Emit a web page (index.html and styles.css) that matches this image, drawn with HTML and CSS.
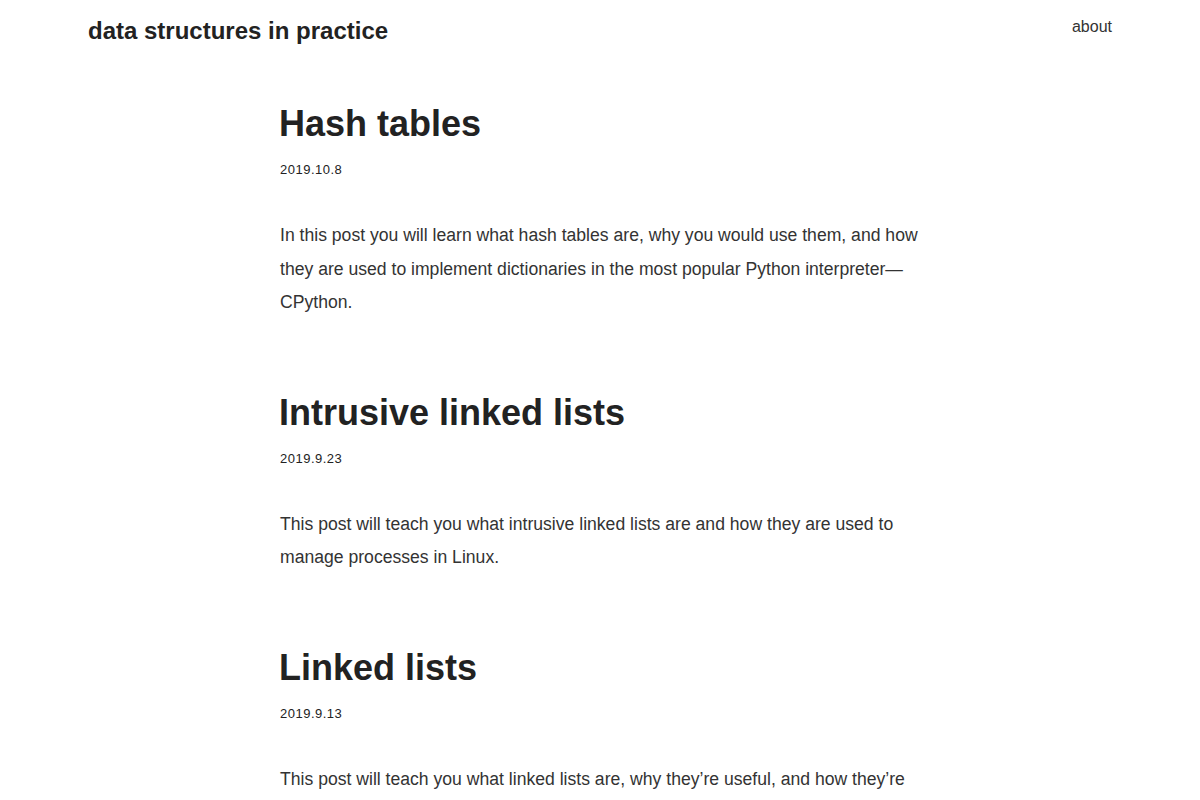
FILE: index.html
```html
<!DOCTYPE html>
<html lang="en">
<head>
    <meta charset="UTF-8">
    <meta name="viewport" content="width=device-width, initial-scale=1.0">
    <title>data structures in practice</title>
    <link rel="stylesheet" href="styles.css">
</head>
<body>

    <header class="site-header">
        <a class="site-title" href="#">data structures in practice</a>
        <nav class="site-nav">
            <a href="#">about</a>
        </nav>
    </header>

    <main class="posts">
        <article class="post">
            <h2 class="post-title"><a href="#">Hash tables</a></h2>
            <div class="post-date">2019.10.8</div>
            <p class="post-summary">In this post you will learn what hash tables are, why you would use them, and how they are used to implement dictionaries in the most popular Python interpreter—CPython.</p>
        </article>

        <article class="post">
            <h2 class="post-title"><a href="#">Intrusive linked lists</a></h2>
            <div class="post-date">2019.9.23</div>
            <p class="post-summary">This post will teach you what intrusive linked lists are and how they are used to manage processes in Linux.</p>
        </article>

        <article class="post">
            <h2 class="post-title"><a href="#">Linked lists</a></h2>
            <div class="post-date">2019.9.13</div>
            <p class="post-summary">This post will teach you what linked lists are, why they’re useful, and how they’re used to implement queues and stacks in real-world software.</p>
        </article>
    </main>

</body>
</html>
```

FILE: styles.css
```css
body {
    margin: 0;
    font-family: "Liberation Sans", Arial, sans-serif;
    color: #222;
    background: #fff;
}
a {
    color: inherit;
    text-decoration: none;
}
.site-header {
    max-width: 1024px;
    margin: 0 auto;
    display: flex;
    justify-content: space-between;
    align-items: flex-start;
    padding-top: 16px;
}
.site-title {
    font-size: 24px;
    font-weight: bold;
    line-height: 30px;
}
.site-nav a {
    font-size: 16px;
    line-height: 22px;
    color: #333;
}
.posts {
    max-width: 640px;
    margin: 0 auto;
    padding-top: 55px;
}
.post {
    margin-bottom: 70px;
}
.post-title {
    font-size: 36px;
    line-height: 44px;
    margin: 0 0 0 -1px;
    padding-top: 1px;
}
.post-date {
    font-size: 13px;
    letter-spacing: 0.5px;
    margin-top: 16px;
}
.post-summary {
    font-size: 17.6px;
    line-height: 33.5px;
    color: #333;
    margin: 42px 0 0;
}
```
